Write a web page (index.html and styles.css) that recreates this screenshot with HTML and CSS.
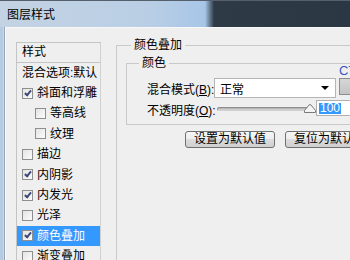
FILE: index.html
```html
<!DOCTYPE html>
<html lang="zh-CN">
<head>
<meta charset="UTF-8">
<title>图层样式</title>
<link rel="stylesheet" href="styles.css">
</head>
<body>
<div class="window">
  <div class="titlebar">图层样式</div>
  <div class="frame">
    <div class="frame-edge"></div>
    <div class="dialog">
      <!-- 左侧样式列表 -->
      <div class="styles-list">
        <div class="list-head">样式</div>
        <div class="item">混合选项:默认</div>
        <div class="item"><span class="cb on"></span>斜面和浮雕</div>
        <div class="item sub"><span class="cb"></span>等高线</div>
        <div class="item sub"><span class="cb"></span>纹理</div>
        <div class="item"><span class="cb"></span>描边</div>
        <div class="item"><span class="cb on"></span>内阴影</div>
        <div class="item"><span class="cb on"></span>内发光</div>
        <div class="item"><span class="cb"></span>光泽</div>
        <div class="item selected"><span class="cb on"></span>颜色叠加</div>
        <div class="item"><span class="cb"></span>渐变叠加</div>
      </div>

      <!-- 右侧设置 -->
      <fieldset class="group outer">
        <legend>颜色叠加</legend>
        <fieldset class="group inner">
          <legend>颜色</legend>
          <div class="row first">
            <label class="lbl">混合模式(<u>B</u>):</label>
            <div class="select"><span>正常</span><span class="arrow"></span></div>
            <div class="swatch"><span class="hint">CT</span></div>
          </div>
          <div class="row">
            <label class="lbl">不透明度(<u>O</u>):</label>
            <div class="slider">
              <div class="track"></div>
              <svg class="thumb" width="12" height="9" viewBox="0 0 12 9">
                <path d="M0.5 8.5 L0.5 6.5 L5 1 Q6 0 7 1 L11.5 6.5 L11.5 8.5 Z" fill="#f4f4f4" stroke="#7a7a7a"/>
              </svg>
            </div>
            <div class="value"><span class="sel">100</span></div>
          </div>
        </fieldset>
        <div class="buttons">
          <button>设置为默认值</button>
          <button>复位为默认值</button>
        </div>
      </fieldset>
    </div>
  </div>
</div>
</body>
</html>
```

FILE: styles.css
```css
html, body { margin: 0; padding: 0; overflow: hidden; }
body { font-family: "Liberation Sans", "Noto Sans CJK SC", sans-serif; font-size: 12px; color: #000; }

.window { width: 350px; height: 260px; overflow: hidden; background: #efefef; }
.titlebar { height: 26px; line-height: 28px; padding-left: 7px; border-top: 1px solid #56606c;
            background: linear-gradient(to right, #c4d3e3 0, #b9cee5 150px, #a7c6e7 205px, #2e3b47 214px, #2b3843 100%); }

.frame { display: flex; height: 233px; }
.frame-edge { width: 4px; flex: none; background: #b7cbe0; border-right: 1px solid #93a5ba; box-shadow: inset -1px 0 0 #c9d7e6; }
.dialog { flex: 1; display: flex; align-items: flex-start; padding-left: 10px; gap: 15px;
          border-left: 1px solid #fafafa; border-top: 1px solid #f8f8f8; background: #efefef; }
.dialog > * { flex: none; }

/* 样式列表 */
.styles-list { width: 83px; margin-top: 14px; border: 1px solid #c4c4c4; border-right-color: #d0d0d0; height: 260px; }
.list-head { height: 18.5px; line-height: 19px; padding-left: 5px; border-bottom: 1px solid #c4c4c4; }
.item { height: 20.4px; line-height: 20px; padding-left: 5px; display: flex; align-items: center; white-space: nowrap; overflow: hidden; }
.item.sub { padding-left: 18px; }
.item.selected { background: #3399ff; color: #fff; }
.cb { position: relative; width: 9px; height: 9px; margin-right: 4px; flex: none;
      border: 1px solid #8e8f8f; background: linear-gradient(135deg, #e4e4e4, #fbfbfb); }
.cb.on::after { content: ""; position: absolute; left: 2.5px; top: 0px; width: 2px; height: 5px;
                border: solid #3c4a78; border-width: 0 2px 2px 0; transform: rotate(40deg); }

/* 分组框 */
.group { margin: 0; min-width: 0; border: 1px solid #c9c9c9; }
.group legend { padding: 0 3px; line-height: 16px; }
.outer { margin-top: 9px; padding: 0 0 0 9px; width: 320px; height: 300px; }
.outer > legend { margin-left: 5px; }
.inner { margin-top: 2px; padding: 0 0 5px 0; }
.inner > legend { margin-left: 12px; }

.row { display: flex; align-items: center; height: 20px; padding-left: 20px; }
.row.first { margin-top: 7px; }
.row + .row { margin-top: 1px; }
.lbl { width: 67px; flex: none; white-space: nowrap; }

.select { width: 120px; height: 18px; flex: none; display: flex; align-items: center; justify-content: space-between;
          border: 1px solid #b5b5b5; background: #fff; padding-left: 5px; box-sizing: border-box; width: 122px; height: 20px; }
.arrow { width: 0; height: 0; margin-right: 6px; border-left: 4px solid transparent; border-right: 4px solid transparent; border-top: 4px solid #000; }
.swatch { position: relative; align-self: flex-start; margin-left: 3px; width: 30px; height: 15px; flex: none;
          border: 1px solid #8d8d8d; background: linear-gradient(#d6d6d6, #c4c4c4); }
.hint { position: absolute; left: -1px; top: -15px; color: #3b57c4; font-size: 13px; line-height: 14px; }

.slider { position: relative; width: 95px; height: 20px; margin-left: 3px; flex: none; }
.track { margin-top: 8px; height: 2px; border-radius: 2px; border: 1px solid #8f8f8f; border-bottom-color: #d0d0d0;
         background: linear-gradient(#a9a9a9, #dcdcdc); }
.thumb { position: absolute; left: 87px; top: 5px; }
.value { margin-left: 4px; margin-top: -2px; width: 40px; height: 14px; flex: none; border: 1px solid #b0b0b0; background: #fff;
         display: flex; align-items: center; }
.sel { margin-left: 2px; padding: 0 1px; background: #3399ff; color: #fff; line-height: 11px; font-size: 12px; }

.buttons { display: flex; gap: 10px; margin-top: 6px; padding-left: 59px; }
.buttons button { flex: none; width: 90px; height: 17px; padding: 0; font: inherit; font-size: 12px; line-height: 15px; color: #000;
                  border: 1px solid #707070; border-radius: 3px;
                  background: linear-gradient(#f6f6f6 0, #ececec 50%, #dcdcdc 50%, #cfcfcf 100%); }
```
